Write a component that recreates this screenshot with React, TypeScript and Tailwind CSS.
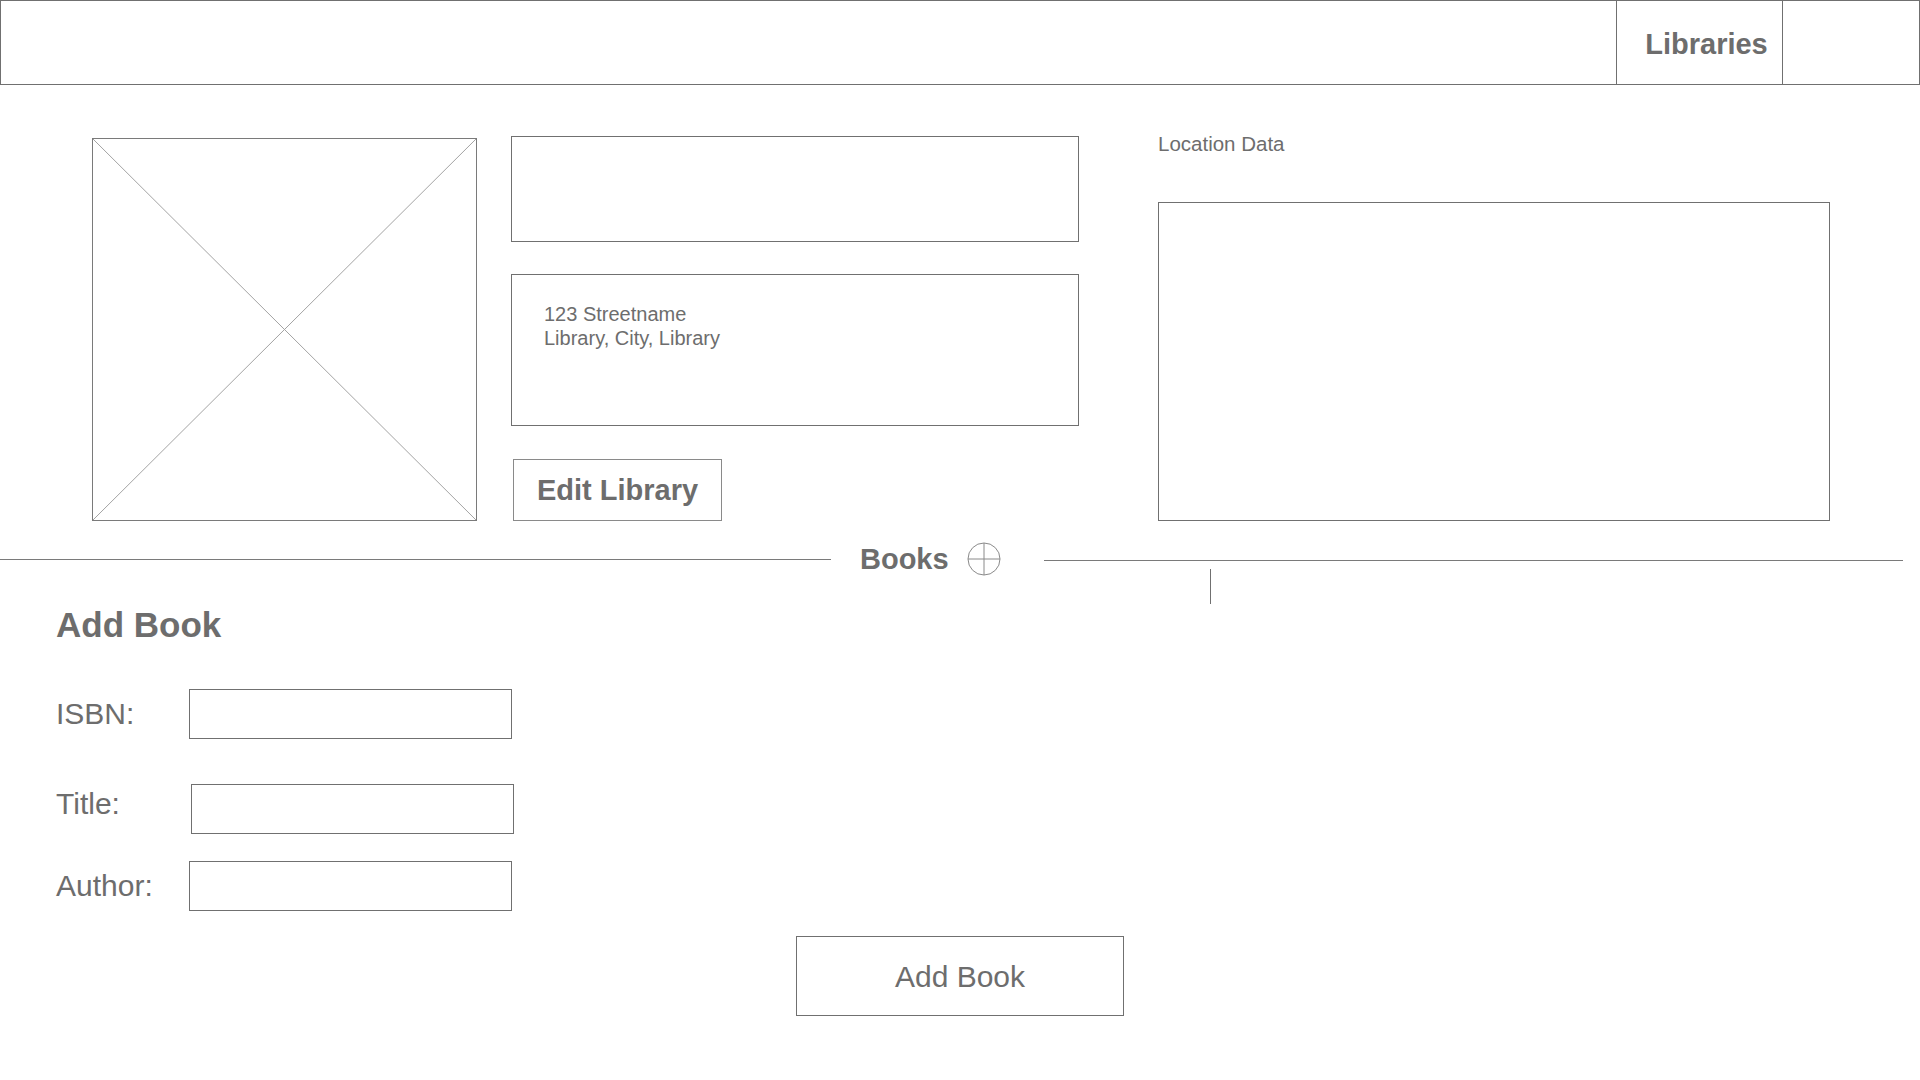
const ink = 'text-[#6d6d6d]'

function ImagePlaceholder() {
  return (
    <div className="mt-[2px] h-[383px] w-[385px] shrink-0 border border-[#7a7a7a]">
      <svg className="h-full w-full" viewBox="0 0 100 100" preserveAspectRatio="none">
        <line x1="0" y1="0" x2="100" y2="100" stroke="#a3a3a3" strokeWidth="1" vectorEffect="non-scaling-stroke" />
        <line x1="100" y1="0" x2="0" y2="100" stroke="#a3a3a3" strokeWidth="1" vectorEffect="non-scaling-stroke" />
      </svg>
    </div>
  )
}

function CirclePlus() {
  return (
    <svg width="34" height="34" viewBox="0 0 34 34" className="shrink-0">
      <circle cx="17" cy="17" r="16" fill="none" stroke="#8a8a8a" strokeWidth="1" />
      <line x1="17" y1="1" x2="17" y2="33" stroke="#8a8a8a" strokeWidth="1" />
      <line x1="1" y1="17" x2="33" y2="17" stroke="#8a8a8a" strokeWidth="1" />
    </svg>
  )
}

function Field({ label, className = '' }: { label: string; className?: string }) {
  return (
    <div className={`flex items-center ${className}`}>
      <span className={`w-[133px] shrink-0 text-[30px] leading-[36px] ${ink}`}>{label}</span>
      <input className="h-[50px] w-[323px] border border-[#707070] bg-white outline-none" />
    </div>
  )
}

export default function App() {
  return (
    <div className="min-h-[1080px] w-[1920px] bg-white" style={{ fontFamily: '"Liberation Sans", Arial, sans-serif' }}>
      {/* top bar */}
      <header className="flex h-[85px] w-full justify-end border border-[#707070]">
        <div className={`flex w-[166px] items-center justify-center border-l border-[#707070] pl-[14px] pt-[4px] text-[29px] font-bold ${ink}`}>
          Libraries
        </div>
        <div className="w-[137px] border-l border-[#707070]" />
      </header>

      {/* library details */}
      <section className="flex items-start pl-[92px] pt-[51px]">
        <ImagePlaceholder />
        <div className="ml-[34px] flex w-[568px] flex-col">
          <div className="h-[106px] border border-[#707070]" />
          <div className="mt-[32px] h-[152px] border border-[#707070] pl-[32px] pt-[27px]">
            <p className={`text-[20px] leading-[24px] ${ink}`}>
              123 Streetname
              <br />
              Library, City, Library
            </p>
          </div>
          <button className={`ml-[2px] mt-[33px] h-[62px] w-[209px] border border-[#8a8a8a] pt-[2px] text-[29px] font-bold ${ink}`}>
            Edit Library
          </button>
        </div>
        <div className="ml-[79px] flex w-[672px] flex-col">
          <p className={`-mt-[4px] text-[20.5px] leading-[24px] ${ink}`}>Location Data</p>
          <div className="mt-[46px] h-[319px] border border-[#707070]" />
        </div>
      </section>

      {/* books divider */}
      <div className="relative mt-[20px] flex h-[36px] items-center">
        <div className="h-px w-[831px] bg-[#7a7a7a]" />
        <span className={`ml-[29px] text-[29px] font-bold leading-[36px] ${ink}`}>Books</span>
        <div className="ml-[18px]">
          <CirclePlus />
        </div>
        <div className="ml-[43px] mt-[2px] h-px w-[859px] bg-[#7a7a7a]" />
        <div className="absolute left-[1210px] top-[28px] h-[35px] w-px bg-[#707070]" />
      </div>

      {/* add book form */}
      <section className="mt-[28px] pl-[56px]">
        <h2 className={`text-[35px] font-bold leading-[40px] ${ink}`}>Add Book</h2>
        <Field label="ISBN:" className="mt-[44px]" />
        <Field label="Title:" className="mt-[45px] [&>input]:ml-[2px] [&>span]:-mt-[10px]" />
        <Field label="Author:" className="mt-[27px]" />
      </section>

      <button className={`mx-auto mt-[25px] block h-[80px] w-[328px] border border-[#707070] text-[30px] ${ink}`}>
        Add Book
      </button>
    </div>
  )
}
